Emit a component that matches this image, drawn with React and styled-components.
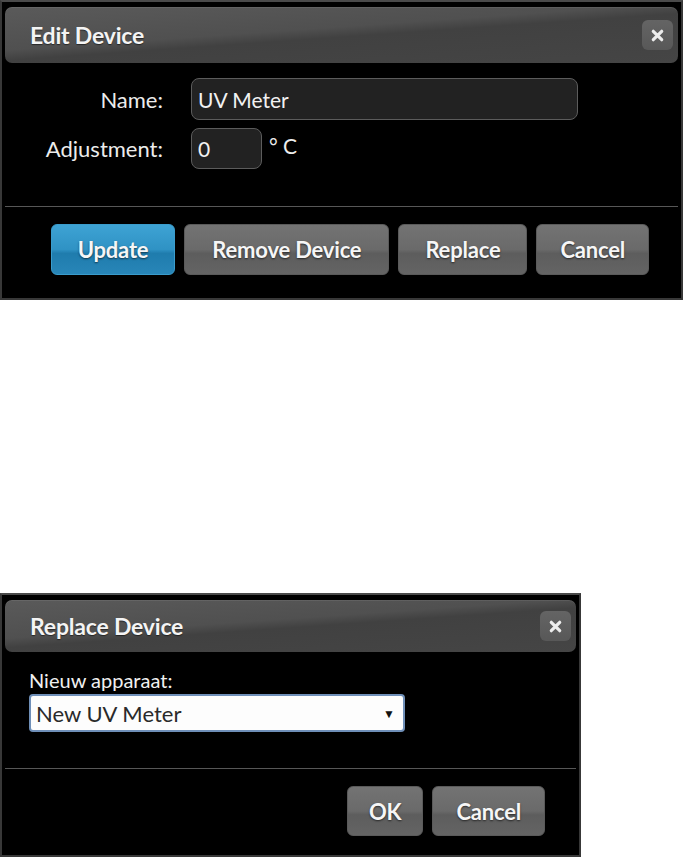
import React from "react";
import styled, { createGlobalStyle, css } from "styled-components";

const GlobalStyle = createGlobalStyle`
  html, body {
    margin: 0;
    padding: 0;
    background: #ffffff;
  }
  body {
    font-family: Lato, "Open Sans", sans-serif;
  }
`;

const Page = styled.div`
  display: flex;
  flex-direction: column;
  align-items: flex-start;
  width: 683px;
`;

const Dialog = styled.div`
  box-sizing: border-box;
  width: ${(p) => p.$width}px;
  margin-top: ${(p) => p.$offset || 0}px;
  background: #000;
  border: 2px solid #383838;
  border-top-color: #4a4a4a;
  padding: 5px 3px 0 3px;
  display: flex;
  flex-direction: column;
`;

const TitleBar = styled.div`
  height: ${(p) => p.$height}px;
  border-radius: 7px;
  background: linear-gradient(
    176deg,
    #5a5a5a 0%,
    #505050 42%,
    #414141 52%,
    #454545 100%
  );
  box-shadow: inset 0 1px 0 rgba(255, 255, 255, 0.08);
  display: flex;
  align-items: center;
  justify-content: space-between;
  padding: 0 5px 0 25px;
`;

const Title = styled.h2`
  margin: 0;
  font-family: Lato, sans-serif;
  font-weight: 700;
  font-size: 23px;
  letter-spacing: -0.2px;
  color: #f4f4f4;
  text-shadow: 0 1px 1px rgba(0, 0, 0, 0.5);
`;

const CloseButton = styled.button`
  width: 31px;
  height: 30px;
  padding: 0;
  border: none;
  border-radius: 6px;
  background: linear-gradient(#646464, #585858);
  display: flex;
  align-items: center;
  justify-content: center;
  cursor: pointer;
`;

const FormGrid = styled.div`
  display: grid;
  grid-template-columns: 158px auto;
  column-gap: 28px;
  row-gap: 8px;
  align-items: center;
  margin-top: 15px;
`;

const Label = styled.label`
  text-align: right;
  font-size: 22px;
  color: #ececec;
`;

const FieldLine = styled.div`
  display: flex;
  align-items: center;
  gap: 7px;
`;

const TextInput = styled.input`
  box-sizing: border-box;
  width: ${(p) => p.$width}px;
  height: ${(p) => p.$height}px;
  background: #222;
  border: 1px solid #5c5c5c;
  border-radius: 8px;
  color: #f2f2f2;
  font-family: Lato, sans-serif;
  font-size: 21px;
  padding: 0 6px;
  outline: none;
`;

const Unit = styled.span`
  font-size: 21px;
  color: #ececec;
  margin-top: -6px;
`;

const Separator = styled.hr`
  margin: ${(p) => p.$top}px 0 0 0;
  border: none;
  height: 1px;
  background: #575757;
`;

const ButtonRow = styled.div`
  display: flex;
  justify-content: flex-end;
  gap: 9px;
  padding: ${(p) => p.$top}px ${(p) => p.$right}px ${(p) => p.$bottom}px 0;
`;

const Button = styled.button`
  height: ${(p) => p.$height}px;
  padding: 0 ${(p) => p.$pad || 25}px;
  border-radius: 6px;
  font-family: Lato, sans-serif;
  font-weight: 700;
  font-size: 22px;
  letter-spacing: -0.2px;
  color: #f6f6f6;
  text-shadow: 0 1px 2px rgba(0, 0, 0, 0.6);
  cursor: pointer;
  border: 1px solid #5a5a5a;
  background: linear-gradient(
    #737373 0%,
    #6a6a6a 50%,
    #5d5d5d 58%,
    #646464 100%
  );
  ${(p) =>
    p.$primary &&
    css`
      border-color: #3a9ccc;
      background: linear-gradient(
        #3ea3d4 0%,
        #2f92c4 50%,
        #1f7cad 58%,
        #2886b8 100%
      );
    `}
`;

const ReplaceBody = styled.div`
  padding: 16px 0 0 24px;
  display: flex;
  flex-direction: column;
`;

const FieldCaption = styled.div`
  font-size: 20px;
  color: #f0f0f0;
  line-height: 24px;
`;

const SelectBox = styled.div`
  box-sizing: border-box;
  width: 376px;
  height: 38px;
  margin-top: 2px;
  background: #fdfdfd;
  border: 2px solid #6f8fb8;
  border-radius: 4px;
  display: flex;
  align-items: center;
  justify-content: space-between;
  padding: 0 8px 0 5px;
  font-size: 22px;
  color: #2a2a2a;
`;

const Arrow = styled.span`
  font-size: 12px;
  color: #111;
`;

const CloseIcon = () => (
  <svg width="15" height="15" viewBox="0 0 16 16">
    <path
      d="M3.5 3.5 L12.5 12.5 M12.5 3.5 L3.5 12.5"
      stroke="#ececec"
      strokeWidth="3.4"
      strokeLinecap="round"
    />
  </svg>
);

export default function App() {
  return (
    <Page>
      <GlobalStyle />
      <Dialog $width={683}>
        <TitleBar $height={56}>
          <Title>Edit Device</Title>
          <CloseButton aria-label="Close">
            <CloseIcon />
          </CloseButton>
        </TitleBar>
        <FormGrid>
          <Label>Name:</Label>
          <TextInput $width={387} $height={42} defaultValue="UV Meter" />
          <Label>Adjustment:</Label>
          <FieldLine>
            <TextInput $width={71} $height={41} defaultValue="0" />
            <Unit>° C</Unit>
          </FieldLine>
        </FormGrid>
        <Separator $top={37} />
        <ButtonRow $top={17} $bottom={23} $right={29}>
          <Button $primary $height={51} $pad={26}>Update</Button>
          <Button $height={51} $pad={27}>Remove Device</Button>
          <Button $height={51} $pad={26}>Replace</Button>
          <Button $height={51} $pad={23}>Cancel</Button>
        </ButtonRow>
      </Dialog>

      <Dialog $width={581} $offset={293}>
        <TitleBar $height={52}>
          <Title>Replace Device</Title>
          <CloseButton aria-label="Close">
            <CloseIcon />
          </CloseButton>
        </TitleBar>
        <ReplaceBody>
          <FieldCaption>Nieuw apparaat:</FieldCaption>
          <SelectBox>
            <span>New UV Meter</span>
            <Arrow>▼</Arrow>
          </SelectBox>
        </ReplaceBody>
        <Separator $top={36} />
        <ButtonRow $top={17} $bottom={19} $right={31}>
          <Button $height={50} $pad={21}>OK</Button>
          <Button $height={50} $pad={23}>Cancel</Button>
        </ButtonRow>
      </Dialog>
    </Page>
  );
}
